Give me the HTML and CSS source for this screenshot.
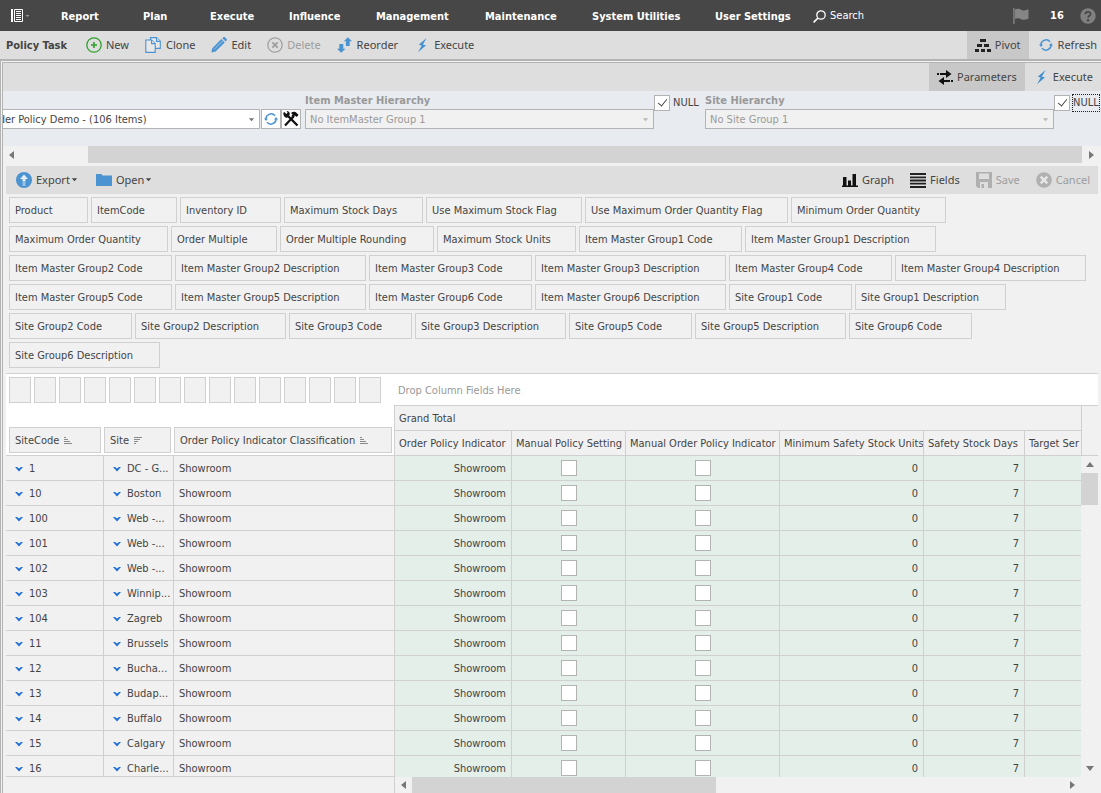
FILE: index.html
```html
<!DOCTYPE html>
<html lang="en">
<head>
<meta charset="utf-8">
<title>Policy Task</title>
<link rel="stylesheet" href="styles.css">
</head>
<body>
<svg class="sprite" aria-hidden="true">
  <symbol id="i-refresh" viewBox="0 0 14 14"><g fill="none" stroke="#4b93d1" stroke-width="1.500"><path d="M1.900 7.500A5.200 5.200 0 0 1 11 3.700"/><path d="M12.100 6.500A5.200 5.200 0 0 1 3 10.300"/></g><path d="M0 6.500h4L2 9zM10 7.500h4L12 5z" fill="#4b93d1"/></symbol>
  <symbol id="i-bolt" viewBox="0 0 16 16"><path d="M12.500 1 4.800 7.800l3 .6L4 15.300l8-7-3.200-.6z" fill="#3f8fd2"/></symbol>
  <symbol id="i-drop" viewBox="0 0 7 4"><path d="M.8.300h5.400L3.500 3.300z" fill="currentColor"/></symbol>
  <symbol id="i-chev" viewBox="0 0 8 6"><path d="M0 1h2l2 1.600L6 1h2L4 5.500z" fill="#1c6fd6"/></symbol>
  <symbol id="i-asc" viewBox="0 0 9 8"><path d="M0 .5h2M0 2.500h4M0 4.500h6M0 6.500h8" stroke="#8a8a8a"/></symbol>
  <symbol id="i-desc" viewBox="0 0 9 8"><path d="M0 .5h8M0 2.500h6M0 4.500h4M0 6.500h2" stroke="#8a8a8a"/></symbol>
</svg>
<div class="app">
  <header class="topbar">
    <button class="menu-button" aria-label="Menu"><svg width="19" height="14" viewBox="0 0 19 14"><path d="M0 0h2v13H0z" fill="#fff"/><path d="M3.500.5h8v12h-8z" fill="none" stroke="#fff"/><path d="M5 2.500h5M5 4.500h5M5 6.500h5M5 8.500h5M5 10.500h5" stroke="#fff"/><path d="M14.500 6h4l-2 2z" fill="#999"/></svg></button>
    <nav class="main-nav">
      <a href="#">Report</a><a href="#">Plan</a><a href="#">Execute</a><a href="#">Influence</a><a href="#">Management</a><a href="#">Maintenance</a><a href="#">System Utilities</a><a href="#">User Settings</a>
    </nav>
    <button class="search"><svg width="13" height="13" viewBox="0 0 13 13"><circle cx="8" cy="5" r="4.200" fill="none" stroke="#fff" stroke-width="1.300"/><path d="M5 8 .6 12.400" stroke="#fff" stroke-width="1.600"/></svg>Search</button>
    <div class="status">
      <svg width="16" height="16" viewBox="0 0 16 16"><path d="M.2 0h1.400v16H.2z" fill="#858585"/><path d="M2 1.500c3-1.300 4.500-.5 6.500.4 2.300 1 4.500.5 7-.6v9.400c-2.500 1.200-5 1.500-7.200.6C6 10.300 4.500 9.800 2 11z" fill="#858585"/></svg>
      <b>16</b>
      <svg width="16" height="16" viewBox="0 0 16 16"><circle cx="8" cy="8" r="7.700" fill="#808080"/><path d="M5.400 6.200C5.400 3 10.700 3.100 10.600 6c0 1.800-2.500 1.800-2.500 3.800" fill="none" stroke="#474747" stroke-width="1.800"/><circle cx="8.100" cy="12.300" r="1.200" fill="#474747"/></svg>
    </div>
  </header>

  <div class="toolbar task-bar">
    <h1>Policy Task</h1>
    <div class="task-actions">
      <button><svg width="16" height="16" viewBox="0 0 16 16"><circle cx="8" cy="8" r="7.200" fill="none" stroke="#2fa02b" stroke-width="1.300"/><path d="M8 5v6M5 8h6" stroke="#2fa02b" stroke-width="1.600"/></svg>New</button>
      <button><svg width="17" height="16" viewBox="0 0 17 16"><g fill="#e8e8e8" stroke="#4b93d1" stroke-width="1.100"><path d="M5.500.6h6l3.800 3.600v7.200h-9.800z"/><path d="M11.500.6v3.800h3.800"/><path d="M.8 3h5.800l3.600 3.500v8.900H.8z"/><path d="M6.600 3v3.600h3.600"/></g></svg>Clone</button>
      <button><svg width="16" height="16" viewBox="0 0 16 16"><path d="M1.300 11.200 10.400 2.100l3.300 3.300-9.100 9.100L.3 15.600zM11.300 1.300 12.400.3c.5-.4 1-.3 1.400 0l1.800 1.800c.4.500.4 1 0 1.400l-1 1.100z" fill="#4b93d1"/><path d="M3 12.500 12 3.500" stroke="#a8c9e8"/></svg>Edit</button>
      <button disabled><svg width="16" height="16" viewBox="0 0 16 16"><circle cx="8" cy="8" r="7.200" fill="none" stroke="#a0a0a0" stroke-width="1.300"/><path d="m5.300 5.300 5.400 5.400m0-5.400-5.400 5.400" stroke="#a0a0a0" stroke-width="1.900"/></svg>Delete</button>
      <button><svg width="16" height="16" viewBox="0 0 16 16"><path d="M10.900.2 15 4.200h-2.300V9H8.900V4.200H6.800zM4.200 15.800 0 11.800h2.300V7h4v4.800h2.200z" fill="#4b93d1"/></svg>Reorder</button>
      <button><svg width="16" height="16"><use href="#i-bolt"/></svg>Execute</button>
    </div>
    <div class="right">
      <button class="active pivot-button"><svg width="16" height="13" viewBox="0 0 16 13"><path d="M5 0h6v3H5zM2 5h5v3H2zM9 5h5v3H9zM0 10h4v3H0zM6 10h4v3H6zM12 10h4v3h-4z" fill="#222"/></svg>Pivot</button>
      <button class="refresh-button"><svg width="14" height="14"><use href="#i-refresh"/></svg>Refresh</button>
    </div>
  </div>

  <main class="frame">
    <div class="frame-inner">
      <div class="toolbar">
        <div class="right">
          <button class="active"><svg width="16" height="15" viewBox="0 0 16 15"><path d="M0 3h2v2H0zM3 3h6V0l5.500 4L9 8V5H3zM16 10h-2v2h2zM13 10H7V7l-5.500 4L7 15v-3h6z" fill="#111"/></svg>Parameters</button>
          <button><svg width="16" height="16"><use href="#i-bolt"/></svg>Execute</button>
        </div>
      </div>

      <form class="params">
        <div class="param-list">
          <div class="combo"><select aria-label="Task"><option>Order Policy Demo - (106 Items)</option></select><svg width="7" height="4"><use href="#i-drop"/></svg></div>
          <button type="button" class="square-button" aria-label="Refresh list"><svg width="14" height="14"><use href="#i-refresh"/></svg></button>
          <button type="button" class="square-button" aria-label="Tools"><svg width="16" height="16" viewBox="0 0 16 16"><path d="M2 14.500 11 5" stroke="#111" stroke-width="2.200"/><path d="m5 5 9.500 9.500" stroke="#111" stroke-width="2.400"/><path d="M1 .8 3.500 3 4.600 1.600 3.600 0C6 0 7.300 2 6.600 4L4.300 6.800C2 7 .3 5 .3 2.600zM8 2c2-2 5-1.700 6 .5l1.600 1.200-1.800 2.400-2-1.500-2 2L8.400 5l1.200-1.600z" fill="#111"/></svg></button>
        </div>
        <div class="param">
          <label for="item-h">Item Master Hierarchy</label>
          <div class="combo"><select id="item-h" disabled><option>No ItemMaster Group 1</option></select><svg width="7" height="4"><use href="#i-drop"/></svg></div>
        </div>
        <label class="null"><input type="checkbox" checked><span>NULL</span></label>
        <div class="param">
          <label for="site-h">Site Hierarchy</label>
          <div class="combo"><select id="site-h" disabled><option>No Site Group 1</option></select><svg width="7" height="4"><use href="#i-drop"/></svg></div>
        </div>
        <label class="null focused"><input type="checkbox" checked><span>NULL</span></label>
      </form>
      <div class="hscroll params-scroll"><i class="arrow left"></i><div class="track"><div class="thumb"></div></div><i class="arrow rightward"></i></div>

      <section class="pivot">
        <div class="toolbar pivot-bar">
          <button><svg width="16" height="16" viewBox="0 0 16 16"><circle cx="8" cy="8" r="8" fill="#4b93d1"/><path d="M8 2.500 12 7H9.500v2.500h-3V7H4zM6.500 10.500h3v1h-3zM6.500 12.500h3v1h-3z" fill="#e4edf5"/></svg><span>Export</span><svg class="caret" width="7" height="4"><use href="#i-drop"/></svg></button>
          <button><svg width="16" height="12" viewBox="0 0 16 12"><path d="M0 0h5.500l1 1.500H16V12H0z" fill="#4b93d1"/></svg><span>Open</span><svg class="caret" width="7" height="4"><use href="#i-drop"/></svg></button>
          <div class="right">
            <button><svg width="16" height="13" viewBox="0 0 16 13"><path d="M0 11.500h16V13H0zM1 3h3.500v8.500H1zM6 6.500h3v5H6zM10.500 0H14v11.500h-3.500z" fill="#111"/></svg>Graph</button>
            <button><svg width="16" height="15" viewBox="0 0 16 15"><path d="M0 1h16M0 4.300h16M0 7.500h16M0 10.700h16M0 14h16" stroke="#222" stroke-width="1.800"/></svg>Fields</button>
            <button disabled><svg width="16" height="16" viewBox="0 0 16 16"><path d="M0 0h16v16H2L0 14zM3 1.500V7h10V1.500zM4 10v6h8v-6zM5.500 12H8v4H5.500z" fill="#b0b0b0" fill-rule="evenodd"/></svg>Save</button>
            <button disabled><svg width="16" height="16" viewBox="0 0 16 16"><circle cx="8" cy="8" r="7.800" fill="#b0b0b0"/><path d="m4.700 4.700 6.600 6.600m0-6.600-6.600 6.600" stroke="#e6e6e6" stroke-width="2.600"/></svg>Cancel</button>
          </div>
        </div>

        <div class="fields">
          <span class="chip" style="width:79px">Product</span><span class="chip" style="width:86px">ItemCode</span><span class="chip" style="width:101px">Inventory ID</span><span class="chip" style="width:139px">Maximum Stock Days</span><span class="chip" style="width:156px">Use Maximum Stock Flag</span><span class="chip" style="width:203px">Use Maximum Order Quantity Flag</span><span class="chip" style="width:155px">Minimum Order Quantity</span>
          <span class="chip" style="width:159px">Maximum Order Quantity</span><span class="chip" style="width:106px">Order Multiple</span><span class="chip" style="width:154px">Order Multiple Rounding</span><span class="chip" style="width:139px">Maximum Stock Units</span><span class="chip item-code">Item Master Group1 Code</span><span class="chip item-desc">Item Master Group1 Description</span>
          <span class="chip item-code">Item Master Group2 Code</span><span class="chip item-desc">Item Master Group2 Description</span><span class="chip item-code">Item Master Group3 Code</span><span class="chip item-desc">Item Master Group3 Description</span><span class="chip item-code">Item Master Group4 Code</span><span class="chip item-desc">Item Master Group4 Description</span>
          <span class="chip item-code">Item Master Group5 Code</span><span class="chip item-desc">Item Master Group5 Description</span><span class="chip item-code">Item Master Group6 Code</span><span class="chip item-desc">Item Master Group6 Description</span><span class="chip site-code">Site Group1 Code</span><span class="chip site-desc">Site Group1 Description</span>
          <span class="chip site-code">Site Group2 Code</span><span class="chip site-desc">Site Group2 Description</span><span class="chip site-code">Site Group3 Code</span><span class="chip site-desc">Site Group3 Description</span><span class="chip site-code">Site Group5 Code</span><span class="chip site-desc">Site Group5 Description</span><span class="chip site-code">Site Group6 Code</span>
          <span class="chip site-desc">Site Group6 Description</span>
        </div>

        <div class="drop-area">
          <div class="slots"><span class="chip"></span><span class="chip"></span><span class="chip"></span><span class="chip"></span><span class="chip"></span><span class="chip"></span><span class="chip"></span><span class="chip"></span><span class="chip"></span><span class="chip"></span><span class="chip"></span><span class="chip"></span><span class="chip"></span><span class="chip"></span><span class="chip"></span></div>
          <div class="drop-hint">Drop Column Fields Here</div>
        </div>

        <div class="grid">
          <div class="row-side">
            <div class="row-fields">
              <span class="chip code">SiteCode<svg width="9" height="8"><use href="#i-asc"/></svg></span><span class="chip site">Site<svg width="9" height="8"><use href="#i-desc"/></svg></span><span class="chip class">Order Policy Indicator Classification<svg width="9" height="8"><use href="#i-asc"/></svg></span>
            </div>
            <div class="row-body">
              <table class="row-table">
                <colgroup><col class="c-code"><col class="c-site"><col class="c-class"></colgroup>
                <tr><td><svg class="chev"><use href="#i-chev"/></svg>1</td><td><svg class="chev"><use href="#i-chev"/></svg>DC - G...</td><td>Showroom</td></tr>
                <tr><td><svg class="chev"><use href="#i-chev"/></svg>10</td><td><svg class="chev"><use href="#i-chev"/></svg>Boston</td><td>Showroom</td></tr>
                <tr><td><svg class="chev"><use href="#i-chev"/></svg>100</td><td><svg class="chev"><use href="#i-chev"/></svg>Web -...</td><td>Showroom</td></tr>
                <tr><td><svg class="chev"><use href="#i-chev"/></svg>101</td><td><svg class="chev"><use href="#i-chev"/></svg>Web -...</td><td>Showroom</td></tr>
                <tr><td><svg class="chev"><use href="#i-chev"/></svg>102</td><td><svg class="chev"><use href="#i-chev"/></svg>Web -...</td><td>Showroom</td></tr>
                <tr><td><svg class="chev"><use href="#i-chev"/></svg>103</td><td><svg class="chev"><use href="#i-chev"/></svg>Winnip...</td><td>Showroom</td></tr>
                <tr><td><svg class="chev"><use href="#i-chev"/></svg>104</td><td><svg class="chev"><use href="#i-chev"/></svg>Zagreb</td><td>Showroom</td></tr>
                <tr><td><svg class="chev"><use href="#i-chev"/></svg>11</td><td><svg class="chev"><use href="#i-chev"/></svg>Brussels</td><td>Showroom</td></tr>
                <tr><td><svg class="chev"><use href="#i-chev"/></svg>12</td><td><svg class="chev"><use href="#i-chev"/></svg>Bucha...</td><td>Showroom</td></tr>
                <tr><td><svg class="chev"><use href="#i-chev"/></svg>13</td><td><svg class="chev"><use href="#i-chev"/></svg>Budap...</td><td>Showroom</td></tr>
                <tr><td><svg class="chev"><use href="#i-chev"/></svg>14</td><td><svg class="chev"><use href="#i-chev"/></svg>Buffalo</td><td>Showroom</td></tr>
                <tr><td><svg class="chev"><use href="#i-chev"/></svg>15</td><td><svg class="chev"><use href="#i-chev"/></svg>Calgary</td><td>Showroom</td></tr>
                <tr><td><svg class="chev"><use href="#i-chev"/></svg>16</td><td><svg class="chev"><use href="#i-chev"/></svg>Charle...</td><td>Showroom</td></tr>
              </table>
            </div>
            <div class="row-foot"></div>
          </div>
          <div class="data-side">
            <div class="data-body">
              <table class="data-table">
                <colgroup><col class="d1"><col class="d2"><col class="d3"><col class="d4"><col class="d5"><col></colgroup>
                <thead>
                  <tr><th colspan="6">Grand Total</th></tr>
                  <tr><th>Order Policy Indicator</th><th>Manual Policy Setting</th><th>Manual Order Policy Indicator</th><th>Minimum Safety Stock Units</th><th>Safety Stock Days</th><th>Target Ser</th></tr>
                </thead>
                <tbody>
                  <tr><td>Showroom</td><td><input type="checkbox" aria-label="Manual policy setting"></td><td><input type="checkbox" aria-label="Manual order policy"></td><td>0</td><td>7</td><td></td></tr>
                  <tr><td>Showroom</td><td><input type="checkbox" aria-label="Manual policy setting"></td><td><input type="checkbox" aria-label="Manual order policy"></td><td>0</td><td>7</td><td></td></tr>
                  <tr><td>Showroom</td><td><input type="checkbox" aria-label="Manual policy setting"></td><td><input type="checkbox" aria-label="Manual order policy"></td><td>0</td><td>7</td><td></td></tr>
                  <tr><td>Showroom</td><td><input type="checkbox" aria-label="Manual policy setting"></td><td><input type="checkbox" aria-label="Manual order policy"></td><td>0</td><td>7</td><td></td></tr>
                  <tr><td>Showroom</td><td><input type="checkbox" aria-label="Manual policy setting"></td><td><input type="checkbox" aria-label="Manual order policy"></td><td>0</td><td>7</td><td></td></tr>
                  <tr><td>Showroom</td><td><input type="checkbox" aria-label="Manual policy setting"></td><td><input type="checkbox" aria-label="Manual order policy"></td><td>0</td><td>7</td><td></td></tr>
                  <tr><td>Showroom</td><td><input type="checkbox" aria-label="Manual policy setting"></td><td><input type="checkbox" aria-label="Manual order policy"></td><td>0</td><td>7</td><td></td></tr>
                  <tr><td>Showroom</td><td><input type="checkbox" aria-label="Manual policy setting"></td><td><input type="checkbox" aria-label="Manual order policy"></td><td>0</td><td>7</td><td></td></tr>
                  <tr><td>Showroom</td><td><input type="checkbox" aria-label="Manual policy setting"></td><td><input type="checkbox" aria-label="Manual order policy"></td><td>0</td><td>7</td><td></td></tr>
                  <tr><td>Showroom</td><td><input type="checkbox" aria-label="Manual policy setting"></td><td><input type="checkbox" aria-label="Manual order policy"></td><td>0</td><td>7</td><td></td></tr>
                  <tr><td>Showroom</td><td><input type="checkbox" aria-label="Manual policy setting"></td><td><input type="checkbox" aria-label="Manual order policy"></td><td>0</td><td>7</td><td></td></tr>
                  <tr><td>Showroom</td><td><input type="checkbox" aria-label="Manual policy setting"></td><td><input type="checkbox" aria-label="Manual order policy"></td><td>0</td><td>7</td><td></td></tr>
                  <tr><td>Showroom</td><td><input type="checkbox" aria-label="Manual policy setting"></td><td><input type="checkbox" aria-label="Manual order policy"></td><td>0</td><td>7</td><td></td></tr>
                </tbody>
              </table>
            </div>
            <div class="hscroll grid-hscroll"><i class="arrow left"></i><div class="track"><div class="thumb"></div></div><i class="arrow rightward"></i></div>
          </div>
          <div class="scroll-side">
            <div class="corner"></div>
            <div class="vscroll"><i class="arrow up"></i><div class="track"><div class="thumb"></div></div><i class="arrow down"></i></div>
            <div class="row-foot"></div>
          </div>
        </div>
      </section>
    </div>
  </main>
</div>
</body>
</html>
```
FILE: styles.css
```css
* { box-sizing: border-box; }
:root {
  --ui: "DejaVu Sans Condensed", "DejaVu Sans", sans-serif;
  --bar: "Noto Sans", "Open Sans", sans-serif;
  --line: #d0d0d0;
  --edge: #b3b3b3;
  --panel: #f1f1f1;
}
body { margin: 0; font: 11px/16px var(--ui); color: #444; background: var(--panel); }
button { font: inherit; color: inherit; background: none; border: 0; padding: 0; }
svg { display: block; flex: none; }
.sprite { position: absolute; width: 0; height: 0; }
.app { display: flex; flex-direction: column; height: 100vh; overflow: hidden; }

.topbar { display: flex; align-items: center; height: 31px; flex: none; background: #474747; color: #fff; padding: 0 5px 0 11px; }
.menu-button { width: 50px; }
.main-nav { display: grid; grid-template-columns: 82px 67px 79px 87px 109px 107px 123px 98px; padding-top: 2px; }
.main-nav a { color: #fff; text-decoration: none; font-weight: bold; white-space: nowrap; }
.search { display: flex; align-items: center; gap: 4px; padding-top: 1px; }
.status { display: flex; align-items: center; margin-left: auto; gap: 16px; }
.status b { width: 19px; padding: 1px 0 0 5px; }

.toolbar { display: flex; align-items: stretch; height: 28px; flex: none; background: #dedede; font-family: var(--bar); }
.toolbar button { display: flex; align-items: center; gap: 4px; }
.toolbar button:disabled { color: #9d9d9d; }
.toolbar .right { display: flex; margin-left: auto; }
.toolbar .active { background: #c8c8c8; }
.task-bar h1 { margin: 0; font: bold 11px/28px var(--ui); padding: 1px 0 0 6px; width: 86px; white-space: nowrap; }
.task-actions { display: flex; gap: 16px; }
.task-bar .right button { padding: 0 8px; }
.task-bar .right .refresh-button { padding: 0 4px 0 10px; gap: 5px; }

.frame { flex: 1; min-height: 0; display: flex; border-top: 2px solid var(--edge); border-left: 1px solid var(--edge); padding: 1px 0 0 1px; }
.frame-inner { flex: 1; min-width: 0; display: flex; flex-direction: column; border-top: 1px solid var(--edge); border-left: 1px solid var(--edge); }
.frame-inner > .toolbar .right button { padding: 0 8px; }

.params { display: flex; height: 55px; flex: none; background: #e8ebf0; padding-top: 2px; overflow: hidden; }
.params > * { flex: none; }
.param-list { display: flex; align-items: flex-start; padding-top: 16px; width: 302px; }
.param-list .combo { width: 278px; margin: 0 1px 0 -21px; flex: none; }
.square-button { display: flex; width: 20px; height: 20px; align-items: center; justify-content: center; border: 1px solid var(--edge); background: #fff; }
.param { width: 349px; }
.param label { display: block; height: 16px; font-weight: bold; color: #999; }
.combo { position: relative; }
.combo select { display: block; appearance: none; width: 100%; height: 20px; padding: 1px 4px 0; border: 1px solid var(--edge); border-radius: 0; background: #fff; color: #444; font: 11px/16px var(--ui); }
.combo select:disabled { background: var(--panel); color: #9a9a9a; opacity: 1; }
.combo svg { position: absolute; right: 5px; top: 9px; color: #777; }
.combo select:disabled + svg { color: #b8b8b8; }
.null { display: flex; align-items: center; gap: 2px; width: 51px; height: 20px; }
.null span { border: 1px dotted transparent; line-height: 16px; }
.null.focused { width: auto; }
.null.focused span { border-color: #222; }

input[type="checkbox"] { appearance: none; display: block; flex: none; width: 16px; height: 16px; margin: 0; border: 1px solid var(--edge); background: #fff; }
input[type="checkbox"]:checked::before { content: ""; display: block; width: 4px; height: 8px; margin: 1px 0 0 5px; border: solid #444; border-width: 0 1px 1px 0; transform: rotate(38deg); }

.hscroll { display: flex; align-items: center; height: 17px; flex: none; background: var(--panel); }
.track { flex: 1; display: flex; align-self: stretch; }
.thumb { background: #d3d3d3; }
.arrow { width: 17px; height: 17px; flex: none; display: flex; align-items: center; justify-content: center; }
.arrow::before { content: ""; border: 4px solid transparent; }
.arrow.left::before { border-left-width: 0; border-right: 5px solid #777; }
.arrow.rightward::before { border-right-width: 0; border-left: 5px solid #777; }
.arrow.up::before { border-top-width: 0; border-bottom: 5px solid #777; }
.arrow.down::before { border-bottom-width: 0; border-top: 5px solid #777; }
.params-scroll .track { padding-left: 68px; }
.params-scroll .thumb { flex: 1; }
.params-scroll .rightward { width: 19px; }

.pivot { flex: 1; min-height: 0; display: flex; flex-direction: column; padding: 3px 3px 0; }
.pivot-bar { padding: 0 8px 0 10px; gap: 18px; }
.pivot-bar .right { gap: 16px; }
.pivot-bar .caret { margin-left: -3px; }
.chip { display: flex; align-items: center; height: 26px; padding: 1px 5px 0; border: 1px solid var(--line); background: var(--panel); white-space: nowrap; }
.fields { display: flex; flex-wrap: wrap; gap: 3px; padding: 3px 3px 5px; flex: none; border-bottom: 1px solid var(--line); }
.item-code { width: 163px; }
.item-desc { width: 191px; }
.site-code { width: 123px; }
.site-desc { width: 151px; }
.drop-area { display: flex; height: 31px; flex: none; background: #fff; padding: 3px 3px 0; }
.slots { display: flex; gap: 3px; width: 389px; }
.slots .chip { width: 22px; padding: 0; }
.drop-hint { line-height: 28px; color: #999; }

.grid { flex: 1; min-height: 0; display: flex; }
.row-side { display: flex; flex-direction: column; width: 388px; flex: none; }
.row-fields { display: flex; align-items: flex-start; gap: 3px; height: 51px; padding: 22px 2px 0 3px; background: #fff; border-bottom: 1px solid var(--line); }
.row-fields .chip { gap: 5px; }
.row-fields .code { width: 92px; }
.row-fields .site { width: 67px; }
.row-fields .class { width: 218px; }
.row-body, .data-body { flex: 1; min-height: 0; overflow: hidden; }
.row-body { border-bottom: 1px solid var(--line); }
.row-foot { height: 16px; flex: none; }
table { border-collapse: separate; border-spacing: 0; table-layout: fixed; }
td, th { height: 25px; padding: 2px 5px 0; border: 0 solid var(--line); border-width: 0 1px 1px 0; white-space: nowrap; overflow: hidden; }
.row-table { width: 388px; }
.row-table td:last-child { border-right: 0; }
.c-code { width: 98px; }
.c-site { width: 70px; }
.row-table td:nth-child(-n+2) { padding: 2px 0 0 9px; }
.chev { display: inline-block; width: 8px; height: 6px; margin-right: 6px; }

.data-side { flex: 1; min-width: 0; display: flex; flex-direction: column; border-left: 1px solid var(--line); }
.data-table { width: 100%; }
.data-table th { background: var(--panel); font-weight: normal; text-align: left; padding: 2px 0 0 4px; }
.data-table tr:first-child th { border-top-width: 1px; height: 26px; }
.data-table td { background: #e5efe9; text-align: right; }
.data-table td:has(input) { padding-top: 0; }
.data-table td input { margin: 0 auto; }
.data-table th:last-child, .data-table td:last-child { border-right: 0; }
.d1 { width: 117px; }
.d2 { width: 114px; }
.d3 { width: 154px; }
.d4 { width: 144px; }
.d5 { width: 101px; }
.grid-hscroll { height: 16px; }
.grid-hscroll .thumb { width: 304px; }
.scroll-side { display: flex; flex-direction: column; width: 17px; flex: none; }
.corner { height: 51px; flex: none; border: 1px solid var(--line); border-right: 0; }
.vscroll { flex: 1; min-height: 0; display: flex; flex-direction: column; }
.vscroll .track { flex-direction: column; }
.vscroll .thumb { height: 32px; }
```
